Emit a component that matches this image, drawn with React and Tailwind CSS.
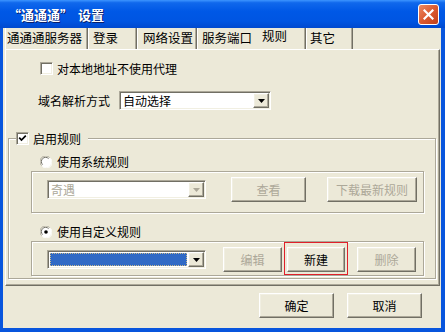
import React from "react";

const sunken =
  "border border-t-[#ACA899] border-l-[#ACA899] border-b-white border-r-white shadow-[inset_1px_1px_0_#716F64,inset_-1px_-1px_0_#F1EFE2]";
const raised =
  "border border-t-white border-l-white border-b-[#716F64] border-r-[#716F64] shadow-[inset_-1px_-1px_0_#ACA899,inset_1px_1px_0_#F1EFE2]";
const etched = "border border-[#ACA899] shadow-[inset_1px_1px_0_#fff,1px_1px_0_#fff]";

function Check({ checked }) {
  return (
    <span className={`w-[13px] h-[13px] bg-white ${sunken} flex items-center justify-center shrink-0`}>
      {checked && (
        <svg width="9" height="9" viewBox="0 0 9 9">
          <path d="M1.2 3.6 L3.5 6 L7.8 1.6" stroke="#000" strokeWidth="1.7" fill="none" />
        </svg>
      )}
    </span>
  );
}

function Radio({ on }) {
  return (
    <svg width="12" height="12" viewBox="0 0 12 12" className="shrink-0">
      <circle cx="6" cy="6" r="5.5" fill="#fff" />
      <path d="M1.6 9.6 A5.2 5.2 0 0 1 9.6 1.6" stroke="#ACA899" fill="none" />
      <path d="M2.6 8.6 A4.1 4.1 0 0 1 8.6 2.6" stroke="#716F64" fill="none" />
      <path d="M10.4 2.4 A5.2 5.2 0 0 1 2.4 10.4" stroke="#fff" fill="none" />
      {on && <circle cx="6" cy="6" r="1.8" fill="#000" />}
    </svg>
  );
}

function DropBtn({ disabled }) {
  return (
    <span className={`w-[16px] h-full bg-[#ECE9D8] ${raised} flex items-center justify-center shrink-0`}>
      <svg width="7" height="4" viewBox="0 0 7 4">
        <path d="M0 0 H7 L3.5 4 Z" fill={disabled ? "#ACA899" : "#000"} />
      </svg>
    </span>
  );
}

function Btn({ children, disabled, w = "w-[75px]" }) {
  return (
    <div
      className={`${w} h-[25px] bg-[#ECE9D8] ${raised} flex items-center justify-center text-[12px] leading-none ${
        disabled ? "text-[#ACA899]" : "text-black"
      }`}
    >
      {children}
    </div>
  );
}

export default function App() {
  return (
    <div className="w-[445px] h-[332px] bg-[#0855DD] flex flex-col font-['Noto_Sans_CJK_SC',sans-serif] text-[12px] text-black select-none">
      {/* title bar */}
      <div className="h-[28px] shrink-0 flex items-center pl-[8px] pr-[6px] bg-[linear-gradient(to_bottom,#3D95FF_0%,#1068EC_10%,#0058E6_40%,#0055E2_75%,#0049CF_100%)]">
        <span className="text-white font-bold text-[13px] leading-none [text-shadow:1px_1px_0_#0A1E6A] flex items-center">
          <span>“通通通”</span>
          <span className="ml-[5px]">设置</span>
        </span>
        <div className="ml-auto w-[21px] h-[21px] rounded-[3px] border border-white bg-[linear-gradient(135deg,#EC8A63_0%,#DB5A30_50%,#C1401A_100%)] flex items-center justify-center">
          <svg width="11" height="11" viewBox="0 0 11 11">
            <path d="M1.5 1.5 L9.5 9.5 M9.5 1.5 L1.5 9.5" stroke="#fff" strokeWidth="2.2" strokeLinecap="square" />
          </svg>
        </div>
      </div>

      {/* client */}
      <div className="flex-1 ml-[3px] mr-[4px] mb-[4px] bg-[#ECE9D8] flex flex-col">
        {/* tabs */}
        <div className="h-[21px] flex pl-[2px] items-stretch text-[12.5px]">
          <div className="w-[83px] pl-[2px] flex items-center border-r border-r-[#716F64] shadow-[inset_-1px_0_0_#ACA899,inset_1px_0_0_#fff]">
            通通通服务器
          </div>
          <div className="w-[49px] pl-[5px] flex items-center border-r border-r-[#716F64] shadow-[inset_-1px_0_0_#ACA899,inset_1px_0_0_#fff]">
            登录
          </div>
          <div className="w-[60px] pl-[6px] flex items-center border-r border-r-[#716F64] shadow-[inset_-1px_0_0_#ACA899,inset_1px_0_0_#fff]">
            网络设置
          </div>
          <div className="w-[58px] pl-[5px] flex items-center shadow-[inset_1px_0_0_#fff]">服务端口</div>
          <div className="w-[51px] pl-[7px] pb-[4px] flex items-center border-r border-r-[#716F64] shadow-[inset_-1px_0_0_#ACA899]">
            规则
          </div>
          <div className="w-[47px] pl-[4px] flex items-center border-r border-r-[#716F64] shadow-[inset_-1px_0_0_#ACA899,inset_1px_0_0_#fff]">
            其它
          </div>
        </div>

        {/* tab page */}
        <div className="h-[237px] ml-[2px] mr-[1px] border border-t-white border-l-white border-r-[#716F64] border-b-[#716F64] shadow-[inset_-1px_-1px_0_#ACA899] flex flex-col">
          <div className="mt-[12px] pl-[34px] flex items-center gap-[4px] h-[13px]">
            <Check />
            <span className="leading-none">对本地地址不使用代理</span>
          </div>

          <div className="mt-[16px] pl-[32px] flex items-center h-[19px]">
            <span className="w-[81px] leading-none">域名解析方式</span>
            <div className={`w-[152px] h-[19px] bg-white ${sunken} flex items-center p-[1px]`}>
              <span className="flex-1 pl-[2px] leading-none">自动选择</span>
              <DropBtn />
            </div>
          </div>

          <fieldset className={`mt-[22px] ml-[2px] w-[428px] ${etched} pb-[2px]`}>
            <legend className="ml-[7px] pr-[7px] bg-[#ECE9D8]">
              <span className="flex items-center gap-[4px] h-[13px]">
                <Check checked />
                <span className="leading-none">启用规则</span>
              </span>
            </legend>

            <div className="mt-[10px] pl-[31px] h-[13px] flex items-center gap-[5px]">
              <Radio />
              <span className="leading-none">使用系统规则</span>
            </div>

            <div className={`mt-[3px] ml-[22px] w-[393px] h-[42px] ${etched} flex items-start pt-[5px] pl-[15px]`}>
              <div className="h-[25px] flex items-center">
                <div className={`w-[159px] h-[19px] bg-white ${sunken} flex items-center p-[1px]`}>
                  <span className="flex-1 pl-[2px] leading-none text-[#ACA899]">奇遇</span>
                  <DropBtn disabled />
                </div>
              </div>
              <div className="ml-[25px]">
                <Btn disabled>查看</Btn>
              </div>
              <div className="ml-[21px]">
                <Btn disabled w="w-[90px]">
                  下载最新规则
                </Btn>
              </div>
            </div>

            <div className="mt-[12px] pl-[31px] h-[13px] flex items-center gap-[5px]">
              <Radio on />
              <span className="leading-none">使用自定义规则</span>
            </div>

            <div className={`mt-[3px] ml-[22px] w-[393px] h-[35px] ${etched} flex items-start pl-[15px]`}>
              <div className="mt-[5px] h-[25px] flex items-center">
                <div className={`w-[159px] h-[19px] bg-white ${sunken} flex items-center p-[1px]`}>
                  <span className="flex-1 h-full p-[1px]">
                    <span className="block h-full bg-[#316AC5] border border-dotted border-[#C9B98A]" />
                  </span>
                  <DropBtn />
                </div>
              </div>
              <div className="ml-[17px] mt-[5px]">
                <Btn disabled w="w-[59px]">
                  编辑
                </Btn>
              </div>
              <div className="ml-[2px] border border-[#E0202A] pt-[4px] pb-[2px] px-[2px]">
                <Btn w="w-[58px]">新建</Btn>
              </div>
              <div className="ml-[9px] mt-[5px]">
                <Btn disabled w="w-[59px]">
                  删除
                </Btn>
              </div>
            </div>
          </fieldset>
        </div>

        {/* bottom buttons */}
        <div className="mt-[7px] flex justify-end pr-[19px] gap-[13px]">
          <Btn>确定</Btn>
          <Btn>取消</Btn>
        </div>
      </div>
    </div>
  );
}
